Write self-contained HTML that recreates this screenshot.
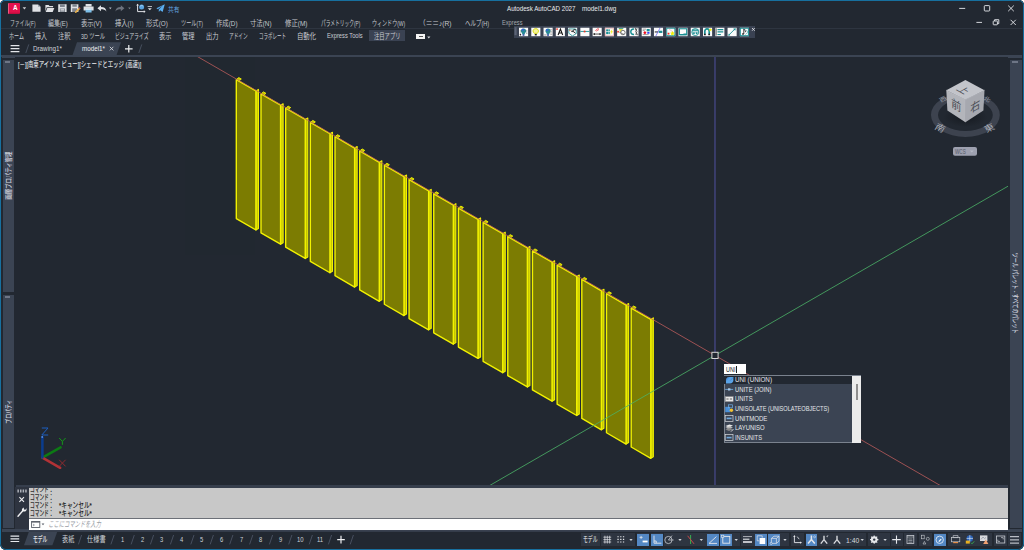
<!DOCTYPE html>
<html lang="ja"><head><meta charset="utf-8"><title>Autodesk AutoCAD 2027 - model1.dwg</title><style>
*{box-sizing:border-box;margin:0;padding:0}
html,body{width:1024px;height:550px;overflow:hidden;background:#fff}
body{font-family:"Liberation Sans",sans-serif;position:relative;color:#d0d3d8}
#win{position:absolute;left:0;top:0;width:1024px;height:550px;background:#222831;border-radius:5px 5px 6px 6px;overflow:hidden}
#app{position:absolute;left:0;top:0;width:1024px;height:550px;background:#222831;overflow:hidden}
#frame{position:absolute;left:0;top:0;width:1024px;height:550px;border:solid #17709f;border-width:1px 1.2px 1.5px 1.1px;border-radius:5px 5px 6px 6px;pointer-events:none}
.abs{position:absolute}
.jt{position:absolute;overflow:visible;display:block}
.jt text{font-family:"Liberation Sans","Noto Sans CJK JP",sans-serif}
.lt{position:absolute;white-space:nowrap;line-height:1;transform-origin:0 50%}
#view{position:absolute;left:15.500px;top:57px;width:992.900px;height:428px;background:#222831;overflow:hidden}
#dwg{position:absolute;left:0;top:0}
.pf{fill:#7c7c02;stroke:#f2f200;stroke-width:1.4;stroke-linejoin:round}
.ps{fill:#c4c400;stroke:#f2f200;stroke-width:1.1;stroke-linejoin:round}
.pt{fill:#c8c800;stroke:#f4f400;stroke-width:.9;stroke-linejoin:round}
.ti{position:absolute;top:1.2px;width:8.6px;height:8.4px;background:#f6f6f6;border:.6px solid #9aa0aa}
.ti i{position:absolute;left:1.8px;top:1.6px;width:4.2px;height:4.4px;border-radius:1px;display:block}
.grip{position:absolute;left:2px;top:1.300px;width:5.200px;height:1.700px;background:#6e7686;display:block}
.sbtn{position:absolute;top:533.600px;height:12.200px;background:#5488c4}
</style></head><body><div id="win"><div id="app"><div id="titlebar">
<div id="logo" class="abs" style="left:8.100px;top:2.700px;width:12.300px;height:11px;background:linear-gradient(180deg,#e6124e 0%,#e0104a 82%,#b40c3a 100%);border-radius:1px;border-left:.8px solid #ee5a80"></div>
<span class="lt" style="left:12.60px;top:7.70px;font-size:7.4px;color:#fff;transform:translateY(-50%) scaleX(0.8608);font-weight:bold;">A</span>
<span class="lt" style="left:506.80px;top:8.70px;font-size:7.6px;color:#e8eaee;transform:translateY(-50%) scaleX(0.8154);">Autodesk AutoCAD 2027</span>
<span class="lt" style="left:582.00px;top:8.70px;font-size:7.6px;color:#e8eaee;transform:translateY(-50%) scaleX(0.8370);">model1.dwg</span>
<svg class="abs" style="left:20px;top:2px" width="170" height="13" viewBox="20 2 170 13">
<path d="M22.6 7.2h3.6l-1.8 2.2z" fill="#c9ccd2"/>
<path d="M32.4 4.4h5.6l2.6 2.4v5h-8.2z" fill="#dfe1e5"/><path d="M38 4.4v2.4h2.6z" fill="#9aa0aa"/>
<path d="M45.4 5h3.2l.9 1h3.6v1.2h-6.4l-1.3 4.4z" fill="#dfe1e5"/><path d="M47.3 7.9h7l-1.6 4h-7z" fill="#dfe1e5"/>
<path d="M58.2 4.3h8.4v7.6h-8.4z" fill="#dfe1e5"/><path d="M60 4.3h4.8v2.6H60z M59.8 8.4h5.2v3.5h-5.2z" fill="#7d838d"/><path d="M60.6 9.2h3.6v.7h-3.6z M60.6 10.6h3.6v.7h-3.6z" fill="#dfe1e5"/>
<path d="M70.8 4.3h7.6v7.6h-7.6z" fill="#dfe1e5"/><path d="M72.4 4.3h4.4v2.4h-4.4z M72.2 8.2h4.8v3.7h-4.8z" fill="#7d838d"/><path d="M75.2 11.6l3.6-3.8 1.2 1.1-3.6 3.8-1.6.4z" fill="#e8b04a"/><path d="M78.8 7.8l.7-.7 1.2 1.1-.7.7z" fill="#d04848"/>
<path d="M85.6 4h6v2.4h-6z" fill="#dfe1e5"/><path d="M83.6 6.4h10v4.2h-10z" fill="#dfe1e5"/><path d="M85.6 8.8h6v3.6h-6z" fill="#7ec0ea"/><path d="M85.6 8.8h6v1h-6z" fill="#f2f4f6"/>
<path d="M97.4 8.2l3.6-3v1.9c3.4 0 5 1.4 5.4 4.3-1.4-1.7-2.8-2.1-5.4-2.1v1.9z" fill="#dfe1e5"/>
<path d="M109 7.6h2.6l-1.3 1.6z" fill="#b8bcc4"/>
<path d="M124.4 8.2l-3.6-3v1.9c-3.4 0-5 1.4-5.4 4.3 1.4-1.7 2.8-2.1 5.4-2.1v1.9z" fill="#6d737e"/>
<path d="M128.2 7.6h2.6l-1.3 1.6z" fill="#7d838d"/>
<path d="M137.6 4.4v7.2h7.2" fill="none" stroke="#dfe1e5" stroke-width="1"/><path d="M136.2 5.6l1.4-1.8 1.4 1.8z M143.8 10.2l1.8 1.4-1.8 1.4z" fill="#dfe1e5"/><circle cx="141.6" cy="7" r="2.5" fill="#5aa4e0"/><path d="M140.2 6.2c1-.9 2-.9 2.8 0" stroke="#cfe6f8" stroke-width=".6" fill="none"/>
<path d="M147.6 6.2h4.4v.9h-4.4z M147.8 8.2h4l-2 2z" fill="#dfe1e5"/>
<path d="M156.4 8.2l8.4-4-2.2 7.8-2.4-1.8-1.4 1.8v-2.4l4-4-5 3.6z" fill="#5aaef0"/>
</svg>
<svg class="jt" style="left:168.20px;top:3.79px" width="11.40" height="9.62" aria-label="共有"><text x="0" y="7.55" font-size="7.4" fill="#62a6e0" textLength="11.40" lengthAdjust="spacingAndGlyphs">共有</text></svg>
<svg class="abs" style="left:950px;top:2px" width="72" height="28" viewBox="950 2 72 28" fill="none" stroke="#e8eaee" stroke-width="0.9">
<path d="M959.2 8.4h6"/><rect x="984.3" y="5.6" width="5.4" height="5.4" rx=".8"/><path d="M1008.2 5.6l5.6 5.6M1013.8 5.6l-5.6 5.6"/>
<path d="M976.4 22.4h5.6"/><rect x="993.2" y="21" width="4.2" height="3.8" rx=".6"/><path d="M994.6 21v-1.3h4.2v3.9h-1.4"/><path d="M1010.6 19.8l5.2 5.2M1015.8 19.8l-5.2 5.2"/>
</svg>
</div>
<div id="menubar">
<svg class="jt" style="left:9.50px;top:17.82px" width="25.50" height="9.75" aria-label="ファイル(F)"><text x="0" y="7.65" font-size="7.5" fill="#c6c9cf" textLength="25.50" lengthAdjust="spacingAndGlyphs">ファイル(F)</text></svg>
<svg class="jt" style="left:48.20px;top:17.82px" width="19.80" height="9.75" aria-label="編集(E)"><text x="0" y="7.65" font-size="7.5" fill="#c6c9cf" textLength="19.80" lengthAdjust="spacingAndGlyphs">編集(E)</text></svg>
<svg class="jt" style="left:81.20px;top:17.82px" width="20.80" height="9.75" aria-label="表示(V)"><text x="0" y="7.65" font-size="7.5" fill="#c6c9cf" textLength="20.80" lengthAdjust="spacingAndGlyphs">表示(V)</text></svg>
<svg class="jt" style="left:114.50px;top:17.82px" width="18.50" height="9.75" aria-label="挿入(I)"><text x="0" y="7.65" font-size="7.5" fill="#c6c9cf" textLength="18.50" lengthAdjust="spacingAndGlyphs">挿入(I)</text></svg>
<svg class="jt" style="left:146.20px;top:17.82px" width="21.80" height="9.75" aria-label="形式(O)"><text x="0" y="7.65" font-size="7.5" fill="#c6c9cf" textLength="21.80" lengthAdjust="spacingAndGlyphs">形式(O)</text></svg>
<svg class="jt" style="left:180.50px;top:17.82px" width="22.00" height="9.75" aria-label="ツール(T)"><text x="0" y="7.65" font-size="7.5" fill="#c6c9cf" textLength="22.00" lengthAdjust="spacingAndGlyphs">ツール(T)</text></svg>
<svg class="jt" style="left:215.50px;top:17.82px" width="21.50" height="9.75" aria-label="作成(D)"><text x="0" y="7.65" font-size="7.5" fill="#c6c9cf" textLength="21.50" lengthAdjust="spacingAndGlyphs">作成(D)</text></svg>
<svg class="jt" style="left:250.00px;top:17.82px" width="21.50" height="9.75" aria-label="寸法(N)"><text x="0" y="7.65" font-size="7.5" fill="#c6c9cf" textLength="21.50" lengthAdjust="spacingAndGlyphs">寸法(N)</text></svg>
<svg class="jt" style="left:284.70px;top:17.82px" width="22.50" height="9.75" aria-label="修正(M)"><text x="0" y="7.65" font-size="7.5" fill="#c6c9cf" textLength="22.50" lengthAdjust="spacingAndGlyphs">修正(M)</text></svg>
<svg class="jt" style="left:320.50px;top:17.82px" width="39.30" height="9.75" aria-label="パラメトリック(P)"><text x="0" y="7.65" font-size="7.5" fill="#c6c9cf" textLength="39.30" lengthAdjust="spacingAndGlyphs">パラメトリック(P)</text></svg>
<svg class="jt" style="left:372.20px;top:17.82px" width="33.30" height="9.75" aria-label="ウィンドウ(W)"><text x="0" y="7.65" font-size="7.5" fill="#c6c9cf" textLength="33.30" lengthAdjust="spacingAndGlyphs">ウィンドウ(W)</text></svg>
<svg class="jt" style="left:419.00px;top:17.82px" width="32.50" height="9.75" aria-label="（＝＝♪(R)"><text x="0" y="7.65" font-size="7.5" fill="#c6c9cf" textLength="32.50" lengthAdjust="spacingAndGlyphs">（＝＝♪(R)</text></svg>
<svg class="jt" style="left:464.80px;top:17.82px" width="24.20" height="9.75" aria-label="ヘルプ(H)"><text x="0" y="7.65" font-size="7.5" fill="#c6c9cf" textLength="24.20" lengthAdjust="spacingAndGlyphs">ヘルプ(H)</text></svg>
<span class="lt" style="left:502.00px;top:22.90px;font-size:7.4px;color:#a4a8b0;transform:translateY(-50%) scaleX(0.7669);">Express</span>
</div>
<div class="abs" style="left:1px;top:27.6px;width:1021px;height:1px;background:#2e3540"></div>
<div id="ribbontabs">
<div class="abs" style="left:369px;top:30.4px;width:36.4px;height:11px;background:#3a4252"></div>
<svg class="jt" style="left:8.80px;top:30.96px" width="15.00" height="9.88" aria-label="ホーム"><text x="0" y="7.75" font-size="7.6" fill="#cacdd3" textLength="15.00" lengthAdjust="spacingAndGlyphs">ホーム</text></svg>
<svg class="jt" style="left:34.50px;top:30.96px" width="12.00" height="9.88" aria-label="挿入"><text x="0" y="7.75" font-size="7.6" fill="#cacdd3" textLength="12.00" lengthAdjust="spacingAndGlyphs">挿入</text></svg>
<svg class="jt" style="left:57.50px;top:30.96px" width="12.50" height="9.88" aria-label="注釈"><text x="0" y="7.75" font-size="7.6" fill="#cacdd3" textLength="12.50" lengthAdjust="spacingAndGlyphs">注釈</text></svg>
<svg class="jt" style="left:80.50px;top:30.96px" width="24.00" height="9.88" aria-label="3D ツール"><text x="0" y="7.75" font-size="7.6" fill="#cacdd3" textLength="24.00" lengthAdjust="spacingAndGlyphs">3D ツール</text></svg>
<svg class="jt" style="left:115.00px;top:30.96px" width="33.50" height="9.88" aria-label="ビジュアライズ"><text x="0" y="7.75" font-size="7.6" fill="#cacdd3" textLength="33.50" lengthAdjust="spacingAndGlyphs">ビジュアライズ</text></svg>
<svg class="jt" style="left:158.80px;top:30.96px" width="12.40" height="9.88" aria-label="表示"><text x="0" y="7.75" font-size="7.6" fill="#cacdd3" textLength="12.40" lengthAdjust="spacingAndGlyphs">表示</text></svg>
<svg class="jt" style="left:182.00px;top:30.96px" width="12.50" height="9.88" aria-label="管理"><text x="0" y="7.75" font-size="7.6" fill="#cacdd3" textLength="12.50" lengthAdjust="spacingAndGlyphs">管理</text></svg>
<svg class="jt" style="left:205.50px;top:30.96px" width="12.50" height="9.88" aria-label="出力"><text x="0" y="7.75" font-size="7.6" fill="#cacdd3" textLength="12.50" lengthAdjust="spacingAndGlyphs">出力</text></svg>
<svg class="jt" style="left:228.80px;top:30.96px" width="18.70" height="9.88" aria-label="アドイン"><text x="0" y="7.75" font-size="7.6" fill="#cacdd3" textLength="18.70" lengthAdjust="spacingAndGlyphs">アドイン</text></svg>
<svg class="jt" style="left:258.50px;top:30.96px" width="27.00" height="9.88" aria-label="コラボレート"><text x="0" y="7.75" font-size="7.6" fill="#cacdd3" textLength="27.00" lengthAdjust="spacingAndGlyphs">コラボレート</text></svg>
<svg class="jt" style="left:296.50px;top:30.96px" width="19.00" height="9.88" aria-label="自動化"><text x="0" y="7.75" font-size="7.6" fill="#cacdd3" textLength="19.00" lengthAdjust="spacingAndGlyphs">自動化</text></svg>
<svg class="jt" style="left:374.00px;top:30.96px" width="26.50" height="9.88" aria-label="注目アプリ"><text x="0" y="7.75" font-size="7.6" fill="#cacdd3" textLength="26.50" lengthAdjust="spacingAndGlyphs">注目アプリ</text></svg>
<span class="lt" style="left:326.50px;top:35.90px;font-size:7.4px;color:#cacdd3;transform:translateY(-50%) scaleX(0.7785);">Express Tools</span>
<div class="abs" style="left:416.4px;top:34.2px;width:8.4px;height:4.6px;background:#f4f4f4"></div><div class="abs" style="left:418.6px;top:36.2px;width:4px;height:.8px;background:#555"></div>
<svg class="abs" style="left:427px;top:35.6px" width="4" height="3"><path d="M.2.4h3.2L1.8 2.4z" fill="#cfd2d8"/></svg>
</div>
<div id="exptb" class="abs" style="left:513.600px;top:26.200px;width:241.500px;height:11.500px;background:#3a4252"></div>
<svg class="abs" style="left:513px;top:26px" width="243" height="12" viewBox="513 26 243 12">
<rect x="514.500" y="27.200" width="2.100" height="8" fill="#5c6476"/>
<rect x="519.00" y="27.750" width="9.100" height="8.450" fill="#fbfbfb"/><g transform="translate(519.00 27.750)"><path d="M4.500 .8c1.700 0 2.600 1.200 2.600 2.400 0 1-.7 1.600-1.200 2.300v1h-2.800v-1c-.5-.7-1.200-1.300-1.200-2.300 0-1.200.9-2.400 2.600-2.400z" fill="#2a8a96"/><path d="M3.600 6.600h1.800v1.400h-1.800z" fill="#1c3c9c"/><circle cx="3.800" cy="2" r="1.100" fill="#3a5ae0"/><path d="M.8 3.200h1.400M6.800 3.200h1.600M.8 5.400h1M7 5.400h1.400" stroke="#333" stroke-width=".5"/><circle cx="1.400" cy="7" r=".8" fill="#111"/></g>
<rect x="531.27" y="27.750" width="9.100" height="8.450" fill="#fbfbfb"/><g transform="translate(531.27 27.750)"><path d="M4.500 .9c1.800 0 2.700 1.200 2.700 2.400 0 1-.7 1.600-1.200 2.300h-3c-.5-.7-1.200-1.300-1.200-2.300 0-1.200.9-2.400 2.700-2.400z" fill="#f4f49a" stroke="#d8d800" stroke-width=".9"/><path d="M3.500 6.200h2v1.500h-2z" fill="#222"/></g>
<rect x="543.54" y="27.750" width="9.100" height="8.450" fill="#fbfbfb"/><g transform="translate(543.54 27.750)"><path d="M4.500 .8c1.700 0 2.600 1.200 2.600 2.400 0 1-.7 1.600-1.200 2.300v1h-2.800v-1c-.5-.7-1.200-1.300-1.200-2.300 0-1.200.9-2.400 2.600-2.400z" fill="#2a8a96"/><path d="M3.600 6.600h1.800v1.400h-1.800z" fill="#1c3c9c"/><circle cx="3.600" cy="2.200" r="1" fill="#3a5ae0"/><path d="M6.400 2h2.200M6.800 3.600h1.800M6.400 5.200h2.200M6.800 6.800h1.800" stroke="#888" stroke-width=".6"/><path d="M.6 7.200h2.400" stroke="#555" stroke-width=".6"/></g>
<rect x="555.80" y="27.750" width="9.100" height="8.450" fill="#fbfbfb"/><g transform="translate(555.80 27.750)"><path d="M2.300 7.200l2.300-6 2.300 6M3.200 5.200h2.800" stroke="#151515" stroke-width="1.100" fill="none"/><rect x=".5" y=".6" width="1.500" height="1.500" fill="#f03020"/></g>
<rect x="568.07" y="27.750" width="9.100" height="8.450" fill="#fbfbfb"/><g transform="translate(568.07 27.750)"><path d="M.8 1.200h6.600l.8 1v3.600l-3.800 2.400-3.600-2.600z" fill="none" stroke="#1a8f93" stroke-width=".8"/><path d="M7.800 2.200c-1.600-.8-3 0-2.800 1.200.2 1.200 2 1 2.400 2.200" stroke="#111" stroke-width="1" fill="none"/><circle cx="4" cy="3.600" r=".8" fill="#111"/><circle cx="1.800" cy="2.400" r=".7" fill="#f05020"/></g>
<rect x="580.34" y="27.750" width="9.100" height="8.450" fill="#fbfbfb"/><g transform="translate(580.34 27.750)"><path d="M0 3.700h9.100" stroke="#1a8f93" stroke-width=".9"/><rect x="3.400" y="2.900" width="1.700" height="1.700" fill="#f03020"/></g>
<rect x="592.61" y="27.750" width="9.100" height="8.450" fill="#fbfbfb"/><g transform="translate(592.61 27.750)"><path d="M3 3.200c.4-1.400 1.400-2.200 3-2.400M4 3.600c.4-1 1.200-1.600 2.400-1.800" stroke="#f04048" stroke-width=".8" fill="none"/><path d="M.8 6.300h7.500" stroke="#111" stroke-width=".7"/><path d="M.6 6.300l1.600-1.100v2.200zM8.500 6.300l-1.600-1.100v2.200z" fill="#111"/></g>
<rect x="604.88" y="27.750" width="9.100" height="8.450" fill="#fbfbfb"/><g transform="translate(604.88 27.750)"><rect x=".4" y=".4" width="8.300" height="7.650" fill="none" stroke="#e8a8a8" stroke-width=".7"/><rect x="1.300" y="1.600" width="1.800" height="1.800" fill="#1a8f93"/><rect x="3.500" y="1.600" width="1.400" height="1.800" fill="#1a8f93"/><rect x="1.300" y="4" width="1.800" height="2.400" fill="#1a8f93"/><rect x="3.500" y="4" width="1.400" height="2.400" fill="#1a8f93"/><path d="M7.600 1l-2.400 3.400 1.400.2-1.400 2.600 3-3.400-1.400-.2z" fill="#f4f020"/></g>
<rect x="617.14" y="27.750" width="9.100" height="8.450" fill="#fbfbfb"/><g transform="translate(617.14 27.750)"><path d="M1.600 .8h4.600l-3 3.800z" fill="#e8e040"/><path d="M1.600 .8h4.600" stroke="#1a8f93" stroke-width=".8"/><circle cx="5.800" cy="4.800" r="2.200" fill="#fff" stroke="#555" stroke-width=".8"/><path d="M1 3.800l6 2.800" stroke="#444" stroke-width=".5"/><circle cx=".9" cy="4" r=".9" fill="#f03020"/></g>
<rect x="629.41" y="27.750" width="9.100" height="8.450" fill="#fbfbfb"/><g transform="translate(629.41 27.750)"><path d="M4.600 1.400c-1.800-.4-3.200.8-3.200 2.600 0 1.800 1.400 3 3.200 2.600" stroke="#1a8f93" stroke-width="1.500" fill="none"/><path d="M6 .6l1.600 3-1.400 3.400M7.800 .6l-1.600 3 1.600 3.400" stroke="#222" stroke-width=".6" fill="none"/><circle cx="6.200" cy="1.200" r=".6" fill="none" stroke="#222" stroke-width=".4"/><circle cx="7.800" cy="6.800" r=".6" fill="none" stroke="#222" stroke-width=".4"/></g>
<rect x="641.68" y="27.750" width="9.100" height="8.450" fill="#fbfbfb"/><g transform="translate(641.68 27.750)"><path d="M1 1.400h3.400M1 2.800h2M1 6.800h6" stroke="#777" stroke-width=".7"/><path d="M5 1.200h3v2.400h-3z" fill="#1a8f93"/><path d="M3.200 3.200l1.600 1.800-1.600 1.800-1.600-1.800z" fill="#f01020"/><rect x="5.600" y="4.200" width="2.200" height="1.800" fill="#3040f0"/></g>
<rect x="653.95" y="27.750" width="9.100" height="8.450" fill="#fbfbfb"/><g transform="translate(653.95 27.750)"><path d="M.8 4.200h3.600" stroke="#333" stroke-width="1.100"/><rect x="5" y="3" width="3.400" height="2.200" fill="#1a8f93"/><path d="M6.200 0l-4.400 8.400" stroke="#5a5af0" stroke-width=".7"/></g>
<rect x="666.22" y="27.750" width="9.100" height="8.450" fill="#fbfbfb"/><g transform="translate(666.22 27.750)"><rect x=".5" y=".5" width="8.100" height="7.450" fill="none" stroke="#1a8f93" stroke-width=".9"/><path d="M2.600 1l5.600 4.600" stroke="#f0b0b0" stroke-width=".7"/><rect x="1.400" y="5" width="1.800" height="1.800" fill="#f03020"/><path d="M6.200 3.200l.7 1.600 1.700.2-1.300 1.100.4 1.700-1.500-.9-1.500.9.400-1.700-1.300-1.100 1.700-.2z" fill="#f0f000"/></g>
<rect x="678.48" y="27.750" width="9.100" height="8.450" fill="#fbfbfb"/><g transform="translate(678.48 27.750)"><rect x=".9" y="1" width="7.300" height="5.800" fill="none" stroke="#1a8f93" stroke-width="1.100"/><path d="M5 6.200h3.200M1 7.200h7.200" stroke="#1a8f93" stroke-width=".9"/></g>
<rect x="690.75" y="27.750" width="9.100" height="8.450" fill="#fbfbfb"/><g transform="translate(690.75 27.750)"><circle cx="4.550" cy="4.300" r="3.500" fill="none" stroke="#1a8f93" stroke-width=".9"/><path d="M1.400 2.400h6.300" stroke="#1a8f93" stroke-width="1.300"/><path d="M1.200 4.300h6.700" stroke="#1a8f93" stroke-width=".6"/><circle cx="3.200" cy="5.400" r=".9" fill="#1a8f93"/><circle cx="5.900" cy="5.400" r=".9" fill="#1a8f93"/></g>
<rect x="703.02" y="27.750" width="9.100" height="8.450" fill="#fbfbfb"/><g transform="translate(703.02 27.750)"><path d="M1.800 6.800v-3.400c0-1.400 1-2.200 2.200-2.200s2.200.8 2.200 2.200v3.400" stroke="#1a8f93" stroke-width="1.700" fill="none"/><path d="M1 6h1.700v1.400h-1.700zM5.300 6h1.700v1.400h-1.700z" fill="#222"/><path d="M7.400 .2l.5 1.300 1.300.1-1 .9.300 1.300-1.100-.7-1.100.7.300-1.300-1-.9 1.300-.1z" fill="#f0f000"/></g>
<rect x="715.29" y="27.750" width="9.100" height="8.450" fill="#fbfbfb"/><g transform="translate(715.29 27.750)"><path d="M.9 .6v7.200" stroke="#777" stroke-width="1.100"/><path d="M2.200 1.800h5.800M2.200 4.200h5.800" stroke="#1a8f93" stroke-width="1.300"/><path d="M2.200 6.800h3.400" stroke="#1a8f93" stroke-width="1.100"/></g>
<rect x="727.56" y="27.750" width="9.100" height="8.450" fill="#fbfbfb"/><g transform="translate(727.56 27.750)"><path d="M1.200 7.400l6.200-6.200" stroke="#1a8f93" stroke-width=".9"/><path d="M8.200 .4l-.5 2.700-2.200-2.200z" fill="#1a8f93"/><circle cx="1.400" cy="7.200" r=".8" fill="none" stroke="#1a8f93" stroke-width=".5"/></g>
<rect x="739.82" y="27.750" width="9.100" height="8.450" fill="#fbfbfb"/><g transform="translate(739.82 27.750)"><rect x=".5" y=".5" width="8.100" height="7.450" fill="none" stroke="#1a8f93" stroke-width="1"/><path d="M4 6.200v-5c.4 1 2.200 1.400 1.800 3.200" stroke="#111" stroke-width=".8" fill="none"/><ellipse cx="3.200" cy="6.300" rx="1.100" ry=".8" fill="#111"/><path d="M5.600 2l2.800 2.200-2.800 2.600" stroke="#1a8f93" stroke-width=".5" fill="none"/></g>
<path d="M752 28l2.800 2.800M754.800 28l-2.800 2.800" stroke="#e8eaee" stroke-width=".8"/>
</svg>
<div id="filetabs">
<svg class="abs" style="left:0;top:42px" width="160" height="14" viewBox="0 42 160 14">
<path d="M10.6 45.6h8.8M10.6 48.6h8.8M10.6 51.6h8.8" stroke="#e4e6ea" stroke-width="1.1"/>
<path d="M25.8 53l3-8.6M138.8 53l3-8.6" stroke="#4a5262" stroke-width=".9"/>
<path d="M72.4 55.6l4.6-13.4h44l-4.6 13.4z" fill="#3b4453"/>
<path d="M109.8 46.8l3.6 3.6M113.4 46.8l-3.6 3.6" stroke="#d4d7dc" stroke-width=".9"/>
<path d="M125 48.8h7.6M128.8 45v7.6" stroke="#f0f1f3" stroke-width="1.2"/>
</svg>
<span class="lt" style="left:33.00px;top:48.90px;font-size:7.4px;color:#d4d7dc;transform:translateY(-50%) scaleX(0.8495);">Drawing1*</span>
<span class="lt" style="left:82.00px;top:48.90px;font-size:7.4px;color:#f0f1f3;transform:translateY(-50%) scaleX(0.8471);">model1*</span>
</div>
<div class="abs" style="left:1px;top:55px;width:1021px;height:1.8px;background:#3b4453"></div>
<div id="view">
<svg id="dwg" width="992.900" height="428" viewBox="15.500 57 992.900 428">
<polygon class="pt" points="235.80,79.60 238.30,77.60 240.80,79.05 238.30,81.05"/><polygon class="ps" points="255.40,90.92 257.95,89.44 257.95,228.44 255.40,229.92"/><polygon class="pf" points="235.80,79.60 255.40,90.92 255.40,229.92 235.80,218.60"/><polygon class="pt" points="260.48,93.88 262.98,91.88 265.48,93.33 262.98,95.33"/><polygon class="ps" points="280.08,105.19 282.63,103.72 282.63,242.72 280.08,244.19"/><polygon class="pf" points="260.48,93.88 280.08,105.19 280.08,244.19 260.48,232.88"/><polygon class="pt" points="285.16,108.15 287.66,106.15 290.16,107.60 287.66,109.60"/><polygon class="ps" points="304.76,119.47 307.31,118.00 307.31,257.00 304.76,258.47"/><polygon class="pf" points="285.16,108.15 304.76,119.47 304.76,258.47 285.16,247.15"/><polygon class="pt" points="309.84,122.43 312.34,120.43 314.84,121.88 312.34,123.88"/><polygon class="ps" points="329.44,133.75 331.99,132.27 331.99,271.27 329.44,272.75"/><polygon class="pf" points="309.84,122.43 329.44,133.75 329.44,272.75 309.84,261.43"/><polygon class="pt" points="334.52,136.70 337.02,134.70 339.52,136.15 337.02,138.15"/><polygon class="ps" points="354.12,148.02 356.67,146.55 356.67,285.55 354.12,287.02"/><polygon class="pf" points="334.52,136.70 354.12,148.02 354.12,287.02 334.52,275.70"/><polygon class="pt" points="359.20,150.98 361.70,148.98 364.20,150.43 361.70,152.43"/><polygon class="ps" points="378.80,162.30 381.35,160.82 381.35,299.82 378.80,301.30"/><polygon class="pf" points="359.20,150.98 378.80,162.30 378.80,301.30 359.20,289.98"/><polygon class="pt" points="383.88,165.26 386.38,163.26 388.88,164.71 386.38,166.71"/><polygon class="ps" points="403.48,176.57 406.03,175.10 406.03,314.10 403.48,315.57"/><polygon class="pf" points="383.88,165.26 403.48,176.57 403.48,315.57 383.88,304.26"/><polygon class="pt" points="408.56,179.53 411.06,177.53 413.56,178.98 411.06,180.98"/><polygon class="ps" points="428.16,190.85 430.71,189.38 430.71,328.38 428.16,329.85"/><polygon class="pf" points="408.56,179.53 428.16,190.85 428.16,329.85 408.56,318.53"/><polygon class="pt" points="433.24,193.81 435.74,191.81 438.24,193.26 435.74,195.26"/><polygon class="ps" points="452.84,205.13 455.39,203.65 455.39,342.65 452.84,344.13"/><polygon class="pf" points="433.24,193.81 452.84,205.13 452.84,344.13 433.24,332.81"/><polygon class="pt" points="457.92,208.08 460.42,206.08 462.92,207.53 460.42,209.53"/><polygon class="ps" points="477.52,219.40 480.07,217.93 480.07,356.93 477.52,358.40"/><polygon class="pf" points="457.92,208.08 477.52,219.40 477.52,358.40 457.92,347.08"/><polygon class="pt" points="482.60,222.36 485.10,220.36 487.60,221.81 485.10,223.81"/><polygon class="ps" points="502.20,233.68 504.75,232.20 504.75,371.20 502.20,372.68"/><polygon class="pf" points="482.60,222.36 502.20,233.68 502.20,372.68 482.60,361.36"/><polygon class="pt" points="507.28,236.64 509.78,234.64 512.28,236.09 509.78,238.09"/><polygon class="ps" points="526.88,247.95 529.43,246.48 529.43,385.48 526.88,386.95"/><polygon class="pf" points="507.28,236.64 526.88,247.95 526.88,386.95 507.28,375.64"/><polygon class="pt" points="531.96,250.91 534.46,248.91 536.96,250.36 534.46,252.36"/><polygon class="ps" points="551.56,262.23 554.11,260.76 554.11,399.76 551.56,401.23"/><polygon class="pf" points="531.96,250.91 551.56,262.23 551.56,401.23 531.96,389.91"/><polygon class="pt" points="556.64,265.19 559.14,263.19 561.64,264.64 559.14,266.64"/><polygon class="ps" points="576.24,276.51 578.79,275.03 578.79,414.03 576.24,415.51"/><polygon class="pf" points="556.64,265.19 576.24,276.51 576.24,415.51 556.64,404.19"/><polygon class="pt" points="581.32,279.46 583.82,277.46 586.32,278.91 583.82,280.91"/><polygon class="ps" points="600.92,290.78 603.47,289.31 603.47,428.31 600.92,429.78"/><polygon class="pf" points="581.32,279.46 600.92,290.78 600.92,429.78 581.32,418.46"/><polygon class="pt" points="606.00,293.74 608.50,291.74 611.00,293.19 608.50,295.19"/><polygon class="ps" points="625.60,305.06 628.15,303.58 628.15,442.58 625.60,444.06"/><polygon class="pf" points="606.00,293.74 625.60,305.06 625.60,444.06 606.00,432.74"/><polygon class="pt" points="630.68,308.02 633.18,306.02 635.68,307.47 633.18,309.47"/><polygon class="ps" points="650.28,319.33 652.83,317.86 652.83,456.86 650.28,458.33"/><polygon class="pf" points="630.68,308.02 650.28,319.33 650.28,458.33 630.68,447.02"/>
<line x1="185.6" y1="50.0" x2="964.9" y2="500.0" stroke="#bc5c5c" stroke-width="1" opacity=".8"/>
<line x1="464.1" y1="500.0" x2="1070.2" y2="150.0" stroke="#4cb468" stroke-width="1" opacity=".8"/>
<line x1="714.5" y1="50" x2="714.5" y2="500" stroke="#5a5ab6" stroke-width="1" opacity=".85"/>
<rect x="711.4" y="352.3" width="6.200" height="6.200" fill="#222831" stroke="#d4d4d4" stroke-width="1"/>
</svg>
</div>
<div id="overlays">
<svg class="jt" style="left:17.50px;top:58.73px" width="123.30" height="10.14" aria-label="[－][南東アイソメ ビュー][シェードとエッジ (高速)]"><text x="0" y="7.96" font-size="7.8" fill="#eceef2" stroke="#eceef2" stroke-width="0.08" textLength="123.30" lengthAdjust="spacingAndGlyphs">[－][南東アイソメ ビュー][シェードとエッジ (高速)]</text></svg>
<svg id="ucs" class="abs" style="left:30px;top:420px" width="50" height="56" viewBox="30 420 50 56">
<path d="M42.400 457.600L60.600 447.400" stroke="#0c7a14" stroke-width="2.500" stroke-linecap="round"/>
<path d="M42.400 457.600L60.200 467.800" stroke="#b23236" stroke-width="2.500" stroke-linecap="round"/>
<path d="M42.400 457.600V437.200" stroke="#0a3c8e" stroke-width="2.500" stroke-linecap="round"/>
<circle cx="42.200" cy="437" r=".9" fill="#5a8ee0"/>
<path d="M41.800 428h6.200l-6.200 7h6.400" stroke="#1c5ec0" stroke-width="1" fill="none"/>
<path d="M59.200 438l3.200 3.400 3.200-3.400M62.400 441.400v3.400" stroke="#149a18" stroke-width="1" fill="none"/>
<path d="M59.200 459.800l6.400 6.600M65.600 459.800l-6.400 6.600" stroke="#8e2a2e" stroke-width="1" fill="none"/>
</svg>
<svg id="viewcube" class="abs" style="left:925px;top:74px" width="82" height="86" viewBox="925 74 82 86">
<defs><radialGradient id="vcsh" cx="50%" cy="50%" r="50%"><stop offset="0" stop-color="#14181e" stop-opacity=".9"/><stop offset="1" stop-color="#14181e" stop-opacity="0"/></radialGradient></defs>
<path fill-rule="evenodd" fill="#3d434f" d="M931 115a34.400 22 0 1 0 68.800 0a34.400 22 0 1 0-68.800 0zM938 115a27.400 16 0 1 0 54.800 0a27.400 16 0 1 0-54.800 0z"/>
<ellipse cx="965.400" cy="117" rx="22" ry="10" fill="url(#vcsh)"/>
<path d="M965.400 80L984.500 90.200L965.400 99.500L946.300 90.200z" fill="#c2c4ca"/>
<path d="M946.300 90.200L965.400 99.500V122.200L947.400 110.600z" fill="#b3b5bb"/>
<path d="M984.500 90.200L965.400 99.500V122.200L983.400 110.600z" fill="#a6a8af"/>
<path d="M965.400 99.500V122.200M946.300 90.200L965.400 99.500L984.500 90.200" stroke="#d0d2d8" stroke-width=".5" fill="none"/>
<rect x="953" y="147" width="24" height="8.800" rx="2" fill="#9da0af"/>
<path d="M969.800 150.400h4l-2 2z" fill="#b6b9c6"/>
</svg>
<span class="lt" style="left:955.20px;top:151.50px;font-size:6.4px;color:#565a68;transform:translateY(-50%) scaleX(0.7233);">WCS</span>
<svg class="jt" style="left:957.35px;top:82.28px;transform:matrix(.7,.4,-.7,.4,0,0);transform-origin:50% 50%" width="12.50" height="16.25" aria-label="上"><text x="0" y="12.75" font-size="12.5" fill="#4a4d55">上</text></svg>
<svg class="jt" style="left:949.55px;top:97.08px;transform:matrix(.8,.46,0,.92,0,0);transform-origin:50% 50%" width="12.50" height="16.25" aria-label="前"><text x="0" y="12.75" font-size="12.5" fill="#4a4d55">前</text></svg>
<svg class="jt" style="left:968.55px;top:97.67px;transform:matrix(.8,-.46,0,.92,0,0);transform-origin:50% 50%" width="12.50" height="16.25" aria-label="右"><text x="0" y="12.75" font-size="12.5" fill="#4a4d55">右</text></svg>
<svg class="jt" style="left:938.60px;top:94.20px;transform:matrix(.8,-.4,.4,.6,0,0);transform-origin:50% 50%" width="8.00" height="10.40" aria-label="西"><text x="0" y="8.16" font-size="8" fill="#9a9ea8">西</text></svg>
<svg class="jt" style="left:982.60px;top:94.20px;transform:matrix(.8,.4,-.4,.6,0,0);transform-origin:50% 50%" width="8.00" height="10.40" aria-label="北"><text x="0" y="8.16" font-size="8" fill="#9a9ea8">北</text></svg>
<svg class="jt" style="left:934.75px;top:120.97px;transform:matrix(.85,.4,-.45,.7,0,0);transform-origin:50% 50%" width="10.50" height="13.65" aria-label="南"><text x="0" y="10.71" font-size="10.5" fill="#a8acb6">南</text></svg>
<svg class="jt" style="left:984.35px;top:120.97px;transform:matrix(.85,-.4,.45,.7,0,0);transform-origin:50% 50%" width="10.50" height="13.65" aria-label="東"><text x="0" y="10.71" font-size="10.5" fill="#a8acb6">東</text></svg>
<div id="cmdpop">
<div class="abs" style="left:723.600px;top:364.400px;width:22px;height:9.800px;background:#fff"></div>
<span class="lt" style="left:726.00px;top:369.60px;font-size:6.8px;color:#222;transform:translateY(-50%) scaleX(0.8027);">UNI</span>
<div class="abs" style="left:736.200px;top:366.200px;width:.7px;height:6.400px;background:#222"></div>
<div class="abs" style="left:723.600px;top:375px;width:137.600px;height:68.200px;background:#3b4453;border:.6px solid #7a828e"></div>
<div class="abs" style="left:724.200px;top:375.600px;width:128px;height:8.900px;background:#222831"></div>
<div class="abs" style="left:852px;top:375.600px;width:8.700px;height:67.200px;background:#ececec"></div>
<div class="abs" style="left:855.500px;top:384.400px;width:2.100px;height:15.200px;background:#8e8e8e"></div>
<span class="lt" style="left:735.00px;top:380.20px;font-size:6.8px;color:#e4e6ea;transform:translateY(-50%) scaleX(0.9241);">UNI (UNION)</span>
<span class="lt" style="left:735.00px;top:389.78px;font-size:6.8px;color:#e4e6ea;transform:translateY(-50%) scaleX(0.8604);">UNITE (JOIN)</span>
<span class="lt" style="left:735.00px;top:399.36px;font-size:6.8px;color:#e4e6ea;transform:translateY(-50%) scaleX(0.8627);">UNITS</span>
<span class="lt" style="left:735.00px;top:408.94px;font-size:6.8px;color:#e4e6ea;transform:translateY(-50%) scaleX(0.8271);">UNISOLATE (UNISOLATEOBJECTS)</span>
<span class="lt" style="left:735.00px;top:418.52px;font-size:6.8px;color:#e4e6ea;transform:translateY(-50%) scaleX(0.8934);">UNITMODE</span>
<span class="lt" style="left:735.00px;top:428.10px;font-size:6.8px;color:#e4e6ea;transform:translateY(-50%) scaleX(0.8724);">LAYUNISO</span>
<span class="lt" style="left:735.00px;top:437.68px;font-size:6.8px;color:#e4e6ea;transform:translateY(-50%) scaleX(0.8508);">INSUNITS</span>
<svg class="abs" style="left:724px;top:375px" width="11" height="68" viewBox="724 375 11 68">
<path d="M726 380.500c0-2 1.200-3.500 3-3.500h4.400v3.200c0 1.800-1.400 3.400-3.400 3.400h-4z" fill="#5aa2e6"/><path d="M729.200 377l-3 3.400M733.400 377.200l-3.200 3.400" stroke="#2f6eb8" stroke-width=".5"/>
<path d="M725.200 389.400h8" stroke="#6fa8dc" stroke-width=".9"/><rect x="728" y="388.300" width="2.400" height="2.200" fill="#a8caea"/>
<rect x="725.200" y="396.600" width="8" height="5" fill="#e8e8e8" stroke="#8a8a8a" stroke-width=".5"/><path d="M726.400 399h2.200M729.800 399h2.200" stroke="#555" stroke-width=".9"/>
<rect x="725.200" y="406.800" width="4.800" height="5.400" fill="#4a90d8"/><rect x="728.400" y="404.800" width="4" height="3" fill="none" stroke="#6fb0ea" stroke-width=".7"/><circle cx="731.400" cy="410.200" r="1.700" fill="#f2c230"/>
<rect x="725.200" y="415.400" width="7.800" height="6" fill="#3b4453" stroke="#d8dade" stroke-width=".7"/><path d="M726.600 418.400h5" stroke="#6fa8dc" stroke-width="1.600"/>
<path d="M725.400 426l4-1.600 3.600 1.200-4 1.800z" fill="#e8e8e8"/><path d="M725.400 427.800l4-1.600 3.600 1.200-4 1.800z" fill="#b8b8b8"/><path d="M725.400 429.600l4-1.600 3.600 1.200-4 1.800z" fill="#888"/><path d="M731 431.600l2.400-2.400" stroke="#f0f0f0" stroke-width=".9"/>
<rect x="725.200" y="434.600" width="7.800" height="6" fill="#3b4453" stroke="#d8dade" stroke-width=".7"/><path d="M726.600 437.600h5" stroke="#6fa8dc" stroke-width="1.600"/>
</svg>
</div>
</div>
<div class="abs" style="left:2px;top:55.1px;width:1020px;height:1.9px;background:#3b4453"></div>
<div class="abs" style="left:2px;top:55.1px;width:13.4px;height:2.6px;background:#3b4453"></div>
<div id="lstrip">
<div class="abs" style="left:2.9px;top:59.6px;width:11.2px;height:232.8px;background:#3b4453"><b class="grip"></b></div>
<div class="abs" style="left:2.9px;top:295px;width:11.2px;height:233.2px;background:#3b4453"><b class="grip"></b></div>
<svg class="jt" style="left:8.4px;top:195.32px;transform:rotate(-90deg);transform-origin:0 50%" width="48.00" height="9.36" aria-label="画層プロパティ管理"><text x="0" y="7.34" font-size="7.2" fill="#d8dbe0" stroke="#d8dbe0" stroke-width="0.1" textLength="48.00" lengthAdjust="spacingAndGlyphs">画層プロパティ管理</text></svg>
<svg class="jt" style="left:8.4px;top:418.92px;transform:rotate(-90deg);transform-origin:0 50%" width="24.20" height="9.36" aria-label="プロパティ"><text x="0" y="7.34" font-size="7.2" fill="#d8dbe0" stroke="#d8dbe0" stroke-width="0.1" textLength="24.20" lengthAdjust="spacingAndGlyphs">プロパティ</text></svg>
</div>
<div id="rstrip">
<div class="abs" style="left:1008.4px;top:57px;width:14.4px;height:472.4px;background:#222831"></div>
<div class="abs" style="left:1008.4px;top:55.1px;width:13.6px;height:3px;background:#3b4453"></div>
<div class="abs" style="left:1010px;top:60px;width:12px;height:468.2px;background:#3b4453"><b class="grip" style="left:2.4px;width:5.8px"></b></div>
<svg class="jt" style="left:1016.4px;top:248.12px;transform:rotate(90deg);transform-origin:0 50%" width="81.00" height="9.36" aria-label="ツール パレット - すべてのパレット"><text x="0" y="7.34" font-size="7.2" fill="#d8dbe0" stroke="#d8dbe0" stroke-width="0.1" textLength="81.00" lengthAdjust="spacingAndGlyphs">ツール パレット - すべてのパレット</text></svg>
</div>
<div id="cmd">
<div class="abs" style="left:15.500px;top:485px;width:992.700px;height:2.500px;background:#363e4c"></div>
<div class="abs" style="left:15.3px;top:487.4px;width:13.7px;height:42px;background:#2e3440"></div>
<div class="abs" style="left:29px;top:487.6px;width:979.1px;height:31px;background:#c8c8c8"></div>
<div class="abs" style="left:29px;top:518.3px;width:979.1px;height:11.4px;background:#fff;border-top:.8px solid #6c7078"></div>
<svg class="abs" style="left:15px;top:487px" width="34" height="42" viewBox="15 487 34 42">
<path d="M17.400 489.600h1.500v3h-1.500zM20 489.600h1.500v3h-1.500zM22.600 489.600h1.500v3h-1.500zM25.200 489.600h1.500v3h-1.500z" fill="#aeb2ba"/>
<path d="M19.4 497.2l4.6 4.600M24 497.200l-4.600 4.600" stroke="#f0f1f3" stroke-width="1.1"/>
<path d="M18 516.2l4.600-5.200" stroke="#f0f1f3" stroke-width="1.4" stroke-linecap="round"/><path d="M22.2 511.2c-.8-1.600 0-3.200 1.600-3.800l.2 2 1.400.3 1-1.500c.8 1.800-.6 3.600-2.600 3.400z" fill="#f0f1f3"/>
<rect x="31.600" y="521.5" width="8.200" height="6" fill="#fff" stroke="#5a5f68" stroke-width=".9"/><path d="M31.6 522h8.200" stroke="#5a5f68" stroke-width="1.2"/><path d="M33 524l1.400 1-1.400 1" stroke="#5a5f68" stroke-width=".6" fill="none"/><path d="M41.600 523.600h2.800l-1.400 1.700z" fill="#5a5f68"/>
</svg>
<div id="hist" class="abs" style="left:29px;top:487.6px;width:979px;height:30.6px;overflow:hidden">
<svg class="jt" style="left:0.90px;top:-3.27px" width="23.50" height="10.14" aria-label="コマンド："><text x="0" y="7.96" font-size="7.8" fill="#101010" stroke="#101010" stroke-width="0.12" textLength="23.50" lengthAdjust="spacingAndGlyphs">コマンド：</text></svg>
<svg class="jt" style="left:0.90px;top:4.43px" width="23.50" height="10.14" aria-label="コマンド："><text x="0" y="7.96" font-size="7.8" fill="#101010" stroke="#101010" stroke-width="0.12" textLength="23.50" lengthAdjust="spacingAndGlyphs">コマンド：</text></svg>
<svg class="jt" style="left:0.90px;top:12.33px" width="23.50" height="10.14" aria-label="コマンド："><text x="0" y="7.96" font-size="7.8" fill="#101010" stroke="#101010" stroke-width="0.12" textLength="23.50" lengthAdjust="spacingAndGlyphs">コマンド：</text></svg>
<svg class="jt" style="left:0.90px;top:20.13px" width="23.50" height="10.14" aria-label="コマンド："><text x="0" y="7.96" font-size="7.8" fill="#101010" stroke="#101010" stroke-width="0.12" textLength="23.50" lengthAdjust="spacingAndGlyphs">コマンド：</text></svg>
<svg class="jt" style="left:29.90px;top:12.33px" width="32.80" height="10.14" aria-label="*キャンセル*"><text x="0" y="7.96" font-size="7.8" fill="#101010" stroke="#101010" stroke-width="0.12" textLength="32.80" lengthAdjust="spacingAndGlyphs">*キャンセル*</text></svg>
<svg class="jt" style="left:29.90px;top:20.13px" width="32.80" height="10.14" aria-label="*キャンセル*"><text x="0" y="7.96" font-size="7.8" fill="#101010" stroke="#101010" stroke-width="0.12" textLength="32.80" lengthAdjust="spacingAndGlyphs">*キャンセル*</text></svg>
</div>
<svg class="jt" style="left:49.2px;top:519px;transform:skewX(-12deg)" width="52.40" height="10.40" aria-label="ここにコマンドを入力"><text x="0" y="8.16" font-size="8" fill="#9a9ea6" textLength="52.40" lengthAdjust="spacingAndGlyphs">ここにコマンドを入力</text></svg>
</div>
<div id="status">
<div class="abs" style="left:2px;top:529.600px;width:1020.400px;height:2.700px;background:linear-gradient(180deg,#394150 60%,#2c333f)"></div>
<div class="abs" style="left:2px;top:529.300px;width:27px;height:2.900px;background:#3b4453"></div>
<div class="abs" style="left:1008.400px;top:528.600px;width:14px;height:3.600px;background:#3b4453"></div>
<svg class="abs" style="left:0;top:532px" width="1024" height="17" viewBox="0 532 1024 17">
<path d="M10.5 536.1h8.700M10.500 538.800h8.700M10.500 541.500h8.700" stroke="#e8eaee" stroke-width="1.2"/>
<path d="M24 545.200l4.800-13.100h28.400l-4.800 13.100z" fill="#3b4453"/>
<path d="M78.4 544.4l3.200-9.400" stroke="#4c5464" stroke-width=".9"/>
<path d="M110.9 544.4l3.200-9.400" stroke="#4c5464" stroke-width=".9"/>
<path d="M131.1 544.4l3.200-9.400" stroke="#4c5464" stroke-width=".9"/>
<path d="M150.4 544.4l3.200-9.400" stroke="#4c5464" stroke-width=".9"/>
<path d="M170.4 544.4l3.200-9.400" stroke="#4c5464" stroke-width=".9"/>
<path d="M190.8 544.4l3.200-9.400" stroke="#4c5464" stroke-width=".9"/>
<path d="M210.2 544.4l3.200-9.400" stroke="#4c5464" stroke-width=".9"/>
<path d="M229.7 544.4l3.200-9.400" stroke="#4c5464" stroke-width=".9"/>
<path d="M249.6 544.4l3.200-9.400" stroke="#4c5464" stroke-width=".9"/>
<path d="M269.4 544.4l3.200-9.400" stroke="#4c5464" stroke-width=".9"/>
<path d="M288.7 544.4l3.200-9.400" stroke="#4c5464" stroke-width=".9"/>
<path d="M309.2 544.4l3.200-9.400" stroke="#4c5464" stroke-width=".9"/>
<path d="M328.4 544.4l3.200-9.400" stroke="#4c5464" stroke-width=".9"/>
<path d="M350.2 544.4l3.200-9.400" stroke="#4c5464" stroke-width=".9"/>
<path d="M337.2 539.6h7.600M341 535.800v7.600" stroke="#f0f1f3" stroke-width="1.2"/>
</svg>
<svg class="jt" style="left:33.40px;top:534.40px" width="14.40" height="10.40" aria-label="モデル"><text x="0" y="8.16" font-size="8" fill="#f4f5f7" stroke="#f4f5f7" stroke-width="0.1" textLength="14.40" lengthAdjust="spacingAndGlyphs">モデル</text></svg>
<svg class="jt" style="left:61.50px;top:534.40px" width="12.30" height="10.40" aria-label="表紙"><text x="0" y="8.16" font-size="8" fill="#d0d3d8" textLength="12.30" lengthAdjust="spacingAndGlyphs">表紙</text></svg>
<svg class="jt" style="left:87.30px;top:534.40px" width="18.70" height="10.40" aria-label="仕様書"><text x="0" y="8.16" font-size="8" fill="#d0d3d8" textLength="18.70" lengthAdjust="spacingAndGlyphs">仕様書</text></svg>
<span class="lt" style="left:121.40px;top:539.80px;font-size:7.2px;color:#d0d3d8;transform:translateY(-50%) scaleX(0.7991);">1</span>
<span class="lt" style="left:140.80px;top:539.80px;font-size:7.2px;color:#d0d3d8;transform:translateY(-50%) scaleX(0.7991);">2</span>
<span class="lt" style="left:160.40px;top:539.80px;font-size:7.2px;color:#d0d3d8;transform:translateY(-50%) scaleX(0.7991);">3</span>
<span class="lt" style="left:180.40px;top:539.80px;font-size:7.2px;color:#d0d3d8;transform:translateY(-50%) scaleX(0.7991);">4</span>
<span class="lt" style="left:200.40px;top:539.80px;font-size:7.2px;color:#d0d3d8;transform:translateY(-50%) scaleX(0.7991);">5</span>
<span class="lt" style="left:219.80px;top:539.80px;font-size:7.2px;color:#d0d3d8;transform:translateY(-50%) scaleX(0.7991);">6</span>
<span class="lt" style="left:239.80px;top:539.80px;font-size:7.2px;color:#d0d3d8;transform:translateY(-50%) scaleX(0.7991);">7</span>
<span class="lt" style="left:259.40px;top:539.80px;font-size:7.2px;color:#d0d3d8;transform:translateY(-50%) scaleX(0.7991);">8</span>
<span class="lt" style="left:279.10px;top:539.80px;font-size:7.2px;color:#d0d3d8;transform:translateY(-50%) scaleX(0.7991);">9</span>
<span class="lt" style="left:297.40px;top:539.80px;font-size:7.2px;color:#d0d3d8;transform:translateY(-50%) scaleX(0.8241);">10</span>
<span class="lt" style="left:316.80px;top:539.80px;font-size:7.2px;color:#d0d3d8;transform:translateY(-50%) scaleX(0.8241);">11</span>
<div id="tray" class="abs" style="left:581px;top:533px;width:440.400px;height:13px;background:#2e3541"></div>
<div class="abs" style="left:599.50px;top:533px;width:1.50px;height:13px;background:#222831"></div>
<div class="abs" style="left:634.75px;top:533px;width:2.65px;height:13px;background:#222831"></div>
<div class="abs" style="left:649.20px;top:533px;width:1.80px;height:13px;background:#222831"></div>
<div class="abs" style="left:662.70px;top:533px;width:1.30px;height:13px;background:#222831"></div>
<div class="abs" style="left:718.60px;top:533px;width:1.40px;height:13px;background:#222831"></div>
<div class="abs" style="left:739.50px;top:533px;width:1.70px;height:13px;background:#222831"></div>
<div class="abs" style="left:766.70px;top:533px;width:1.50px;height:13px;background:#222831"></div>
<div class="abs" style="left:789.10px;top:533px;width:1.60px;height:13px;background:#222831"></div>
<div class="abs" style="left:803.75px;top:533px;width:1.95px;height:13px;background:#222831"></div>
<div class="abs" style="left:866.40px;top:533px;width:1.50px;height:13px;background:#222831"></div>
<div class="abs" style="left:889.50px;top:533px;width:0.80px;height:13px;background:#222831"></div>
<div class="abs" style="left:902.90px;top:533px;width:1.20px;height:13px;background:#222831"></div>
<div class="abs" style="left:917.00px;top:533px;width:1.50px;height:13px;background:#222831"></div>
<div class="abs" style="left:932.25px;top:533px;width:1.45px;height:13px;background:#222831"></div>
<div class="abs" style="left:945.80px;top:533px;width:1.80px;height:13px;background:#222831"></div>
<div class="abs" style="left:992.30px;top:533px;width:1.60px;height:13px;background:#222831"></div>
<div class="abs" style="left:1006.80px;top:533px;width:1.40px;height:13px;background:#222831"></div>
<div class="sbtn" style="left:637.40px;width:11.80px"></div>
<div class="sbtn" style="left:651.00px;width:11.70px"></div>
<div class="sbtn" style="left:707.00px;width:11.60px"></div>
<div class="sbtn" style="left:720.00px;width:11.70px"></div>
<div class="sbtn" style="left:755.00px;width:11.70px"></div>
<div class="sbtn" style="left:768.20px;width:11.80px"></div>
<div class="sbtn" style="left:805.70px;width:11.60px"></div>
<div class="sbtn" style="left:933.70px;width:12.00px"></div>
<svg class="jt" style="left:583.00px;top:534.40px" width="14.60" height="10.40" aria-label="モデル"><text x="0" y="8.16" font-size="8" fill="#f0f1f3" textLength="14.60" lengthAdjust="spacingAndGlyphs">モデル</text></svg>
<span class="lt" style="left:846.40px;top:539.80px;font-size:7px;color:#d8dade;transform:translateY(-50%) scaleX(0.9689);">1:40</span>
<svg class="abs" style="left:581px;top:533px" width="441" height="13" viewBox="581 533 441 13" fill="none" stroke="#e6e8ec" stroke-width=".9">
<path d="M603.400 537.200h7.800M603.400 539.600h7.800M603.400 542h7.800M604.900 535.700v7.800M607.300 535.700v7.800M609.700 535.700v7.800" stroke-width=".7"/>
<path d="M617.400 536.800h6.800M617.400 539.400h6.800M617.400 542h6.800" stroke-width="1.100" stroke-dasharray="1.300 1.450"/>
<path d="M629.30 538.90h3.400l-1.700 2z" fill="#d0d3d8" stroke="none"/>
<path d="M639.600 537.400h3M641.100 535.900v3" stroke-width=".8"/><rect x="642.600" y="540.600" width="5" height="1.800" fill="#fff" stroke="none"/>
<path d="M654 535.600v7.600h7.400M654 541h2.200v2.200" stroke-width=".9"/>
<circle cx="668.400" cy="540" r="3.600" stroke="#c8ccd2" stroke-width=".8"/><path d="M668.400 540h5.200M668.400 540l3.600-4.400" stroke="#c8ccd2" stroke-width=".8"/>
<path d="M678.30 538.90h3.400l-1.700 2z" fill="#d0d3d8" stroke="none"/>
<path d="M690.600 535v9" stroke="#36b050" stroke-width="1"/><path d="M687.600 535.800l6.400 8" stroke="#c84848" stroke-width="1"/>
<path d="M699.60 538.90h3.400l-1.700 2z" fill="#d0d3d8" stroke="none"/>
<path d="M709 543.400h8M709 543.400l7.400-6.800" stroke-width=".9"/>
<rect x="722.800" y="536.400" width="7" height="6.800" stroke-width=".9"/><rect x="721.600" y="535.200" width="2.200" height="2.200" fill="#5488c4" stroke-width=".6"/>
<path d="M734.50 538.90h3.400l-1.700 2z" fill="#d0d3d8" stroke="none"/>
<path d="M743 536.600h9" stroke-width=".7"/><path d="M743 539.200h6.400" stroke-width="1.100"/><path d="M743 542h9" stroke-width="1.600"/>
<rect x="759.600" y="538" width="5.600" height="6" fill="#fff" stroke="none"/><path d="M757.200 535.800h5v2M757.200 535.800v5h2" stroke-width=".7"/>
<path d="M771.400 538.400l2.600-2.200h5v5l-2.600 2.200h-5zM771.400 538.400h5v5M776.400 538.400l2.600-2.200" stroke-width=".7"/><circle cx="771.200" cy="543.400" r="1.100" fill="#5488c4" stroke-width=".6"/>
<path d="M783.30 538.90h3.400l-1.700 2z" fill="#d0d3d8" stroke="none"/>
<path d="M794.400 535.600v7h7" stroke-width=".9"/><path d="M793.200 537l1.200-1.800 1.200 1.800zM800 541.400l1.800 1.200-1.800 1.200z" fill="#e6e8ec" stroke="none"/><path d="M797.200 536.600l2 2.600" stroke-width=".8"/>
<path d="M811.400 535.600v4l-3.400 4M811.400 539.600l3.400 4" stroke-width="1.500" stroke-linejoin="round"/><circle cx="814.600" cy="536.800" r="1" stroke-width=".5"/>
<path d="M824 535.800v3.800l-3.200 4M824 539.600l3.200 4" stroke-width="1.400" stroke="#d8dade"/><path d="M826.600 536.800l1.400-1.400M827.300 535.600v1.600" stroke-width=".6"/>
<path d="M837 535.800v3.800l-3.200 4M837 539.600l3.200 4" stroke-width="1.400" stroke="#d8dade"/>
<path d="M860.50 538.90h3.400l-1.700 2z" fill="#d0d3d8" stroke="none"/>
<circle cx="874.200" cy="539.600" r="2.500" stroke-width="1.700"/><path d="M874.200 535.400v8.400M870 539.600h8.400M871.200 536.600l6 6M877.200 536.600l-6 6" stroke-width="1.100"/><circle cx="874.200" cy="539.600" r="1.200" fill="#2e3541" stroke="none"/>
<path d="M883.40 538.90h3.400l-1.700 2z" fill="#d0d3d8" stroke="none"/>
<path d="M892.200 539.600h8.600M896.500 535.400v8.400" stroke-width="1.100"/>
<rect x="907" y="535.600" width="6.800" height="8" stroke-width=".8" stroke="#c8ccd2"/><path d="M907 537h6.800M908.400 539h4M908.400 540.600h4M908.400 542.200h4" stroke-width=".6" stroke="#c8ccd2"/>
<rect x="921.600" y="535.200" width="2.600" height="3.600" stroke-width=".6" stroke="#c8ccd2"/><circle cx="927.800" cy="538.800" r="1.500" stroke-width=".6" stroke="#c8ccd2"/><path d="M923 544l1.400-2.600 1.400 2.600z" stroke-width=".6" stroke="#c8ccd2"/>
<circle cx="939.700" cy="539.800" r="3.700" stroke-width=".9" stroke="#dfe8f4"/><path d="M938.800 541.600l2.400-2.400" stroke-width="1.200" stroke="#fff"/>
<path d="M953.200 535.600h4.800v2h-4.800z" stroke-width=".7" stroke="#c8ccd2"/><rect x="951.400" y="537.600" width="8.400" height="4.200" stroke-width=".7" stroke="#c8ccd2"/><path d="M953.200 542.600h4.800" stroke="#e89048" stroke-width="1.200"/>
<circle cx="969.800" cy="538.400" r="3.200" fill="#2a62b8" stroke="none"/><path d="M969.800 535.200v6.400M966.600 538.400h6.400" stroke="#cfe0f4" stroke-width=".7"/><rect x="965.800" y="540.600" width="4" height="3" fill="#e8b020" stroke="none"/><path d="M970.800 542.600l1.200 1.200 2.200-2.400" stroke="#36b050" stroke-width=".9"/>
<rect x="980" y="535.400" width="7.400" height="5.600" fill="#d8dade" stroke="none"/><path d="M981 539.400l2-2.400 1.600 1.600 1.400-1.200" stroke="#7a8290" stroke-width=".6"/><path d="M985.800 539.400l2.600 4.600h-5.200z" fill="#f0a070" stroke="none"/>
<rect x="996.400" y="536" width="8.400" height="7" stroke-width=".8" stroke="#c8ccd2"/><path d="M1001 537.600h2.200v1.800M1000 541.400h-2.200v-1.800" stroke-width=".7" stroke="#c8ccd2"/>
<path d="M1010 536.600h9M1010 539.900h9M1010 543.100h9" stroke-width="1.200" stroke="#b8bcc4"/>
</svg>
</div></div><div id="frame"></div></div></body></html>
